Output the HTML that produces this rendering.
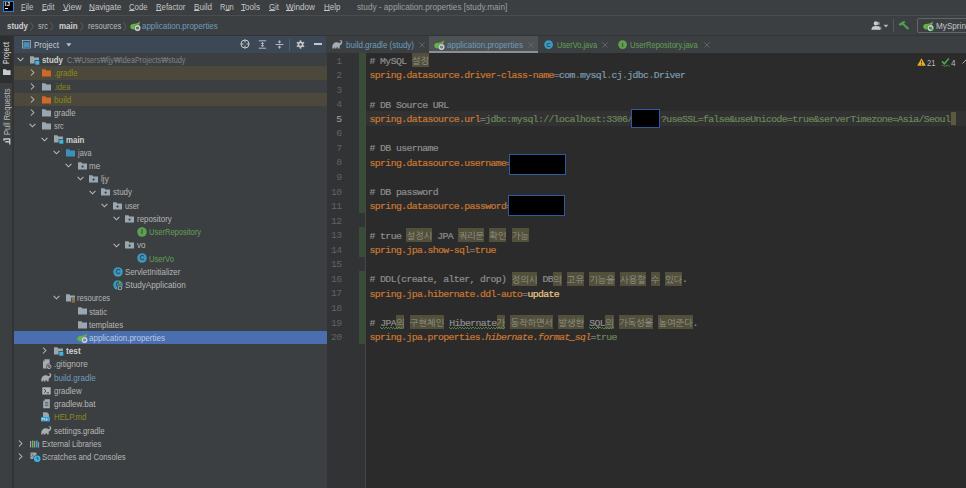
<!DOCTYPE html>
<html lang="ko"><head><meta charset="utf-8"><title>study - application.properties [study.main]</title>
<style>
html,body{margin:0;padding:0;background:#3c3f41;}
body{width:966px;height:488px;position:relative;overflow:hidden;font-family:"Liberation Sans","NanumGothic","Noto Sans CJK KR",sans-serif;font-size:8.6px;color:#bbbbbb;}
.a{position:absolute;white-space:pre;line-height:1;}
.t{position:absolute;white-space:pre;height:13.23px;line-height:13.23px;top:1.1px;}
.row{position:absolute;left:13px;width:313.6px;height:13.23px;}
.b{font-weight:bold;color:#d0d0d0}
.m{font-family:"Liberation Mono","NanumGothic","Noto Sans CJK KR",monospace;font-size:9.8px;letter-spacing:-0.62px;}
.ln{position:absolute;left:327px;width:14.5px;text-align:right;color:#606366;height:14.557px;line-height:14.557px;}
.cl{-webkit-text-stroke:0.2px;position:absolute;left:369.6px;height:14.557px;line-height:14.557px;white-space:pre;}
.cl>span{position:relative;top:2.1px}.cl>span.kr{top:0.5px}.cl>span.ty{top:0}.ty>span.kr{position:relative;top:0.5px}.ty>span.c{position:relative;top:2.1px}
.k{color:#cc7832}.c{color:#8e8e8e}.g{color:#6a8759}.v{color:#7d9cb0}.e{color:#808080}
.kr{font-family:"Liberation Sans","NanumGothic","Noto Sans CJK KR",sans-serif;font-size:9.1px;background:#52503a;display:inline-block;height:14.057px;line-height:17.557000000000002px;vertical-align:top;color:#94948c;letter-spacing:0;-webkit-text-stroke:0}
.ty::after{content:'';position:absolute;left:0;right:0;bottom:-1.5px;height:1.6px;background:repeating-linear-gradient(90deg,#5c9c4c 0 1.3px,transparent 1.3px 2.6px) 0 0/100% 0.8px no-repeat,repeating-linear-gradient(90deg,transparent 0 1.3px,#5c9c4c 1.3px 2.6px) 0 0.8px/100% 0.8px no-repeat;}
svg{position:absolute;overflow:visible}
u{text-decoration:underline;text-underline-offset:0px;text-decoration-thickness:0.6px}
</style></head><body>

<div class="a" style="left:0;top:0;width:966px;height:16px;background:#3c3f41"></div>
<div class="a" style="left:3px;top:0.8px;width:11px;height:11.2px;background:#000;border:0.8px solid #2f7fd6;box-sizing:border-box"></div>
<div class="a" style="left:4.8px;top:2.2px;font-size:5.6px;font-weight:bold;color:#fff;letter-spacing:0.3px">IJ</div>
<div class="a" style="left:5px;top:8.3px;width:3.4px;height:0.9px;background:#fff"></div>
<div id="s1" class="a" style="left:21px;top:3.4px;transform:scaleX(0.8875);transform-origin:0 0;color:#c4c4c4"><u>F</u>ile</div>
<div id="s2" class="a" style="left:42px;top:3.4px;transform:scaleX(0.8439);transform-origin:0 0;color:#c4c4c4"><u>E</u>dit</div>
<div id="s3" class="a" style="left:63px;top:3.4px;transform:scaleX(0.9900);transform-origin:0 0;color:#c4c4c4"><u>V</u>iew</div>
<div id="s4" class="a" style="left:89px;top:3.4px;transform:scaleX(0.9488);transform-origin:0 0;color:#c4c4c4"><u>N</u>avigate</div>
<div id="s5" class="a" style="left:128.7px;top:3.4px;transform:scaleX(0.8997);transform-origin:0 0;color:#c4c4c4"><u>C</u>ode</div>
<div id="s6" class="a" style="left:156px;top:3.4px;transform:scaleX(0.9015);transform-origin:0 0;color:#c4c4c4"><u>R</u>efactor</div>
<div id="s7" class="a" style="left:193.5px;top:3.4px;transform:scaleX(0.9412);transform-origin:0 0;color:#c4c4c4"><u>B</u>uild</div>
<div id="s8" class="a" style="left:219.5px;top:3.4px;transform:scaleX(0.8745);transform-origin:0 0;color:#c4c4c4">R<u>u</u>n</div>
<div id="s9" class="a" style="left:241px;top:3.4px;transform:scaleX(0.9470);transform-origin:0 0;color:#c4c4c4"><u>T</u>ools</div>
<div id="s10" class="a" style="left:268.5px;top:3.4px;transform:scaleX(0.9104);transform-origin:0 0;color:#c4c4c4"><u>G</u>it</div>
<div id="s11" class="a" style="left:286px;top:3.4px;transform:scaleX(0.9479);transform-origin:0 0;color:#c4c4c4"><u>W</u>indow</div>
<div id="s12" class="a" style="left:324px;top:3.4px;transform:scaleX(0.9216);transform-origin:0 0;color:#c4c4c4"><u>H</u>elp</div>
<div id="s13" class="a" style="left:357px;top:3.0px;transform:scaleX(0.9509);transform-origin:0 0;color:#9c9fa1">study - application.properties [study.main]</div>
<div class="a" style="left:0;top:15.2px;width:966px;height:0.8px;background:#4a4d4f"></div>
<div id="s14" class="a b" style="left:6.5px;top:22px;transform:scaleX(0.9162);transform-origin:0 0;">study</div>
<svg style="left:29.5px;top:21.8px" width="4" height="9" viewBox="0 0 4 9"><path d="M0.5 0.3 L3.2 4.5 L0.5 8.7" fill="none" stroke="#66696b" stroke-width="0.7"/></svg>
<div id="s15" class="a" style="left:38.3px;top:22px;transform:scaleX(0.8632);transform-origin:0 0;">src</div>
<svg style="left:50.4px;top:21.8px" width="4" height="9" viewBox="0 0 4 9"><path d="M0.5 0.3 L3.2 4.5 L0.5 8.7" fill="none" stroke="#66696b" stroke-width="0.7"/></svg>
<div id="s16" class="a b" style="left:58.6px;top:22px;transform:scaleX(0.9271);transform-origin:0 0;">main</div>
<svg style="left:79.8px;top:21.8px" width="4" height="9" viewBox="0 0 4 9"><path d="M0.5 0.3 L3.2 4.5 L0.5 8.7" fill="none" stroke="#66696b" stroke-width="0.7"/></svg>
<div id="s17" class="a" style="left:87.6px;top:22px;transform:scaleX(0.8851);transform-origin:0 0;">resources</div>
<svg style="left:123.2px;top:21.8px" width="4" height="9" viewBox="0 0 4 9"><path d="M0.5 0.3 L3.2 4.5 L0.5 8.7" fill="none" stroke="#66696b" stroke-width="0.7"/></svg>
<div id="s18" class="a" style="left:141.8px;top:22px;transform:scaleX(0.9277);transform-origin:0 0;color:#6d9cbe">application.properties</div>
<div class="a" style="left:0;top:35.3px;width:966px;height:0.9px;background:#323537"></div>
<svg style="left:129.5px;top:20.6px" width="11" height="10.5" viewBox="0 0 11 10.5"><path d="M9.7 0.3 C10 2.4 9.4 4.2 8 5.2 L4.6 8.3 C2.6 8.9 0.2 7.8 0.2 5.5 C0.2 3.3 2.4 2.8 4.8 2.7 C6.9 2.6 8.6 2 9.7 0.3Z" fill="#62b543"/><circle cx="7.5" cy="7.1" r="3.25" fill="#3c3f41"/><circle cx="7.5" cy="7.1" r="2.2" fill="none" stroke="#c9cdd0" stroke-width="1.7"/><circle cx="7.5" cy="7.1" r="0.5" fill="#c9cdd0"/></svg>
<svg style="left:870.6px;top:21px" width="19" height="9" viewBox="0 0 19 9"><circle cx="7.2" cy="2.4" r="1.7" fill="#8d9194"/><path d="M5 8.4 C5 5.6 6 4.9 7.6 4.9 S10.6 5.8 10.6 8.4Z" fill="#8d9194"/><circle cx="4.8" cy="2.4" r="2.1" fill="#c8cbcd"/><path d="M0.4 8.8 C0.4 6 2.2 5 4.8 5 S9.2 6 9.2 8.8Z" fill="#c8cbcd"/><path d="M12.4 3.8 L17.4 3.8 L14.9 6.6Z" fill="#b4b7b9"/></svg>
<div class="a" style="left:893.3px;top:19px;width:0.8px;height:13px;background:#55585a"></div>
<svg style="left:898px;top:20px" width="12" height="11" viewBox="0 0 12 11"><path d="M1.3 5 L6.7 1.6" stroke="#4fa354" stroke-width="2.1" fill="none"/><path d="M4.2 3.3 L10.4 9.1" stroke="#4fa354" stroke-width="2" fill="none"/></svg>
<div class="a" style="left:917.2px;top:18.4px;width:60px;height:14.8px;border:0.8px solid #646769;border-radius:2px;box-sizing:border-box"></div>
<svg style="left:923.4px;top:21.4px" width="11" height="10.5" viewBox="0 0 11 10.5"><path d="M9.7 0.3 C10 2.4 9.4 4.2 8 5.2 L4.6 8.3 C2.6 8.9 0.2 7.8 0.2 5.5 C0.2 3.3 2.4 2.8 4.8 2.7 C6.9 2.6 8.6 2 9.7 0.3Z" fill="#62b543"/><circle cx="7.5" cy="7.1" r="3.25" fill="#3c3f41"/><circle cx="7.5" cy="7.1" r="2.2" fill="none" stroke="#c9cdd0" stroke-width="1.7"/><circle cx="7.5" cy="7.1" r="0.5" fill="#c9cdd0"/><circle cx="8.9" cy="8.6" r="1.4" fill="#1fe01f"/></svg>
<div class="a" style="left:936.4px;top:22.3px;font-size:8.6px;color:#c4c4c4;transform:scaleX(0.95);transform-origin:0 0">MySpringApplication</div>
<div class="a" style="left:0;top:36.2px;width:13px;height:452px;background:#3c3f41"></div>
<div class="a" style="left:0;top:36.2px;width:13px;height:46.5px;background:#2d2f30"></div>
<div class="a" style="left:2.2px;top:64.4px;transform:rotate(-90deg) scaleX(0.84);transform-origin:0 0;font-size:8.4px;color:#e0e0e0;">Project</div>
<svg style="left:2.5px;top:68.5px" width="7.6" height="6.2" viewBox="0 0 8 6"><path d="M0 0 H3 L3.8 1 H8 V6 H0Z" fill="#c7cbce"/></svg>
<div class="a" style="left:2.6px;top:134.8px;transform:rotate(-90deg) scaleX(0.9);transform-origin:0 0;font-size:8.4px;color:#b8b8b8;">Pull Requests</div>
<svg style="left:3px;top:138.4px" width="8" height="7" viewBox="0 0 8 7"><path d="M6.7 0.4 V6.6 M0.4 1 H6.7 M2.2 3.7 H6.7 M1 1 V2.8" fill="none" stroke="#c6c9cb" stroke-width="1.35"/></svg>
<div class="a" style="left:13.4px;top:36.2px;width:313px;height:16.9px;background:#3c4855"></div>
<svg style="left:21.6px;top:39.8px" width="9" height="9" viewBox="0 0 9 9"><rect x="0.4" y="0.4" width="8.2" height="7.6" fill="none" stroke="#a4abb1" stroke-width="0.8"/><rect x="1.4" y="2.2" width="6.2" height="4.8" fill="#3a94c5"/></svg>
<div id="s19" class="a" style="left:34.2px;top:41px;transform:scaleX(0.9091);transform-origin:0 0;color:#c8cbcd;font-size:8.8px">Project</div>
<svg style="left:66px;top:42.8px" width="6" height="4" viewBox="0 0 6 4"><path d="M0.2 0.3 H5.4 L2.8 3.4Z" fill="#c0c3c5"/></svg>
<svg style="left:239.6px;top:39.4px" width="10" height="10" viewBox="0 0 9 9"><circle cx="4.5" cy="4.5" r="3.6" fill="none" stroke="#c4c7c9" stroke-width="0.9"/><path d="M4.5 0.5 V3.2 M4.5 5.8 V8.5 M0.5 4.5 H3.2 M5.8 4.5 H8.5" stroke="#c4c7c9" stroke-width="0.9"/></svg>
<svg style="left:257.5px;top:39.8px" width="9" height="9" viewBox="0 0 9 9"><path d="M0.8 0.8 H8.2 M0.8 8.2 H8.2" stroke="#c4c7c9" stroke-width="0.9"/><path d="M4.5 2 L6.3 3.8 H2.7Z M4.5 7 L6.3 5.2 H2.7Z" fill="#c4c7c9"/><path d="M4.5 3 V6" stroke="#c4c7c9" stroke-width="0.8"/></svg>
<svg style="left:274.5px;top:39.8px" width="9" height="9" viewBox="0 0 9 9"><path d="M0.6 4.5 H8.4" stroke="#c4c7c9" stroke-width="0.9"/><path d="M4.5 3.4 L6.3 1.4 H2.7Z M4.5 5.6 L6.3 7.6 H2.7Z" fill="#c4c7c9"/><path d="M4.5 0.3 V2 M4.5 7 V8.7" stroke="#c4c7c9" stroke-width="0.8"/></svg>
<div class="a" style="left:289px;top:38.5px;width:0.8px;height:12px;background:#525d69"></div>
<svg style="left:295.5px;top:40px" width="9" height="9" viewBox="0 0 9 9"><g fill="#c4c7c9"><circle cx="4.5" cy="4.5" r="2.9"/><rect x="3.7" y="0.3" width="1.6" height="8.4"/><rect x="3.7" y="0.3" width="1.6" height="8.4" transform="rotate(60 4.5 4.5)"/><rect x="3.7" y="0.3" width="1.6" height="8.4" transform="rotate(120 4.5 4.5)"/></g><circle cx="4.5" cy="4.5" r="1.2" fill="#3c4855"/></svg>
<div class="a" style="left:313.9px;top:43.3px;width:8.2px;height:1.5px;background:#c4c7c9"></div>
<div class="a" style="left:13.4px;top:53.1px;width:313px;height:435px;background:#3c3f41"></div>
<div class="row" style="top:53.10px;">
<svg style="left:3.7px;top:4.2px" width="7" height="5" viewBox="0 0 7 5"><path d="M0.6 0.8 L3.5 3.8 L6.4 0.8" fill="none" stroke="#b6b9bb" stroke-width="1.05"/></svg>
<svg style="left:17.0px;top:3px" width="9" height="8" viewBox="0 0 9 8"><path d="M0 0.3 H3.4 L4.3 1.4 H9 V7.4 H0Z" fill="#9aa7b0"/><rect x="4.6" y="4" width="5.2" height="5.2" fill="#3c3f41"/><rect x="5.3" y="4.7" width="4" height="4" fill="#40b6e0"/></svg>
<div id="s20" class="t" style="left:28.7px;color:#b6b6b6;transform:scaleX(0.9074);transform-origin:0 0;"><span class="b">study</span></div>
</div>
<div class="row" style="top:66.33px;background:#4c483b;">
<svg style="left:16.7px;top:3px" width="5" height="7" viewBox="0 0 5 7"><path d="M0.9 0.5 L3.9 3.5 L0.9 6.5" fill="none" stroke="#b6b9bb" stroke-width="1.05"/></svg>
<svg style="left:29.0px;top:3px" width="9" height="8" viewBox="0 0 9 8"><path d="M0 0.3 H3.4 L4.3 1.4 H9 V7.4 H0Z" fill="#d0682a"/></svg>
<div id="s21" class="t" style="left:40.6px;color:#8a8a1c;transform:scaleX(0.8980);transform-origin:0 0;">.gradle</div>
</div>
<div class="row" style="top:79.56px;">
<svg style="left:16.7px;top:3px" width="5" height="7" viewBox="0 0 5 7"><path d="M0.9 0.5 L3.9 3.5 L0.9 6.5" fill="none" stroke="#b6b9bb" stroke-width="1.05"/></svg>
<svg style="left:29.0px;top:3px" width="9" height="8" viewBox="0 0 9 8"><path d="M0 0.3 H3.4 L4.3 1.4 H9 V7.4 H0Z" fill="#9aa7b0"/></svg>
<div id="s22" class="t" style="left:40.6px;color:#8a8a1c;transform:scaleX(0.8798);transform-origin:0 0;">.idea</div>
</div>
<div class="row" style="top:92.79px;background:#4c483b;">
<svg style="left:16.7px;top:3px" width="5" height="7" viewBox="0 0 5 7"><path d="M0.9 0.5 L3.9 3.5 L0.9 6.5" fill="none" stroke="#b6b9bb" stroke-width="1.05"/></svg>
<svg style="left:29.0px;top:3px" width="9" height="8" viewBox="0 0 9 8"><path d="M0 0.3 H3.4 L4.3 1.4 H9 V7.4 H0Z" fill="#d0682a"/></svg>
<div id="s23" class="t" style="left:40.6px;color:#8a8a1c;transform:scaleX(0.9575);transform-origin:0 0;">build</div>
</div>
<div class="row" style="top:106.02px;">
<svg style="left:16.7px;top:3px" width="5" height="7" viewBox="0 0 5 7"><path d="M0.9 0.5 L3.9 3.5 L0.9 6.5" fill="none" stroke="#b6b9bb" stroke-width="1.05"/></svg>
<svg style="left:29.0px;top:3px" width="9" height="8" viewBox="0 0 9 8"><path d="M0 0.3 H3.4 L4.3 1.4 H9 V7.4 H0Z" fill="#9aa7b0"/></svg>
<div id="s24" class="t" style="left:40.7px;color:#b6b6b6;transform:scaleX(0.9083);transform-origin:0 0;">gradle</div>
</div>
<div class="row" style="top:119.25px;">
<svg style="left:15.7px;top:4.2px" width="7" height="5" viewBox="0 0 7 5"><path d="M0.6 0.8 L3.5 3.8 L6.4 0.8" fill="none" stroke="#b6b9bb" stroke-width="1.05"/></svg>
<svg style="left:29.0px;top:3px" width="9" height="8" viewBox="0 0 9 8"><path d="M0 0.3 H3.4 L4.3 1.4 H9 V7.4 H0Z" fill="#9aa7b0"/></svg>
<div id="s25" class="t" style="left:40.7px;color:#b6b6b6;transform:scaleX(0.8545);transform-origin:0 0;">src</div>
</div>
<div class="row" style="top:132.48px;">
<svg style="left:27.7px;top:4.2px" width="7" height="5" viewBox="0 0 7 5"><path d="M0.6 0.8 L3.5 3.8 L6.4 0.8" fill="none" stroke="#b6b9bb" stroke-width="1.05"/></svg>
<svg style="left:40.7px;top:3px" width="9" height="8" viewBox="0 0 9 8"><path d="M0 0.3 H3.4 L4.3 1.4 H9 V7.4 H0Z" fill="#9aa7b0"/><rect x="4.6" y="4" width="5.2" height="5.2" fill="#3c3f41"/><rect x="5.3" y="4.7" width="4" height="4" fill="#40b6e0"/></svg>
<div id="s26" class="t" style="left:52.6px;color:#b6b6b6;transform:scaleX(0.9171);transform-origin:0 0;"><span class="b">main</span></div>
</div>
<div class="row" style="top:145.71px;">
<svg style="left:39.7px;top:4.2px" width="7" height="5" viewBox="0 0 7 5"><path d="M0.6 0.8 L3.5 3.8 L6.4 0.8" fill="none" stroke="#b6b9bb" stroke-width="1.05"/></svg>
<svg style="left:52.6px;top:3px" width="9" height="8" viewBox="0 0 9 8"><path d="M0 0.3 H3.4 L4.3 1.4 H9 V7.4 H0Z" fill="#3a90b8"/></svg>
<div id="s27" class="t" style="left:64.5px;color:#b6b6b6;transform:scaleX(0.8563);transform-origin:0 0;">java</div>
</div>
<div class="row" style="top:158.94px;">
<svg style="left:51.7px;top:4.2px" width="7" height="5" viewBox="0 0 7 5"><path d="M0.6 0.8 L3.5 3.8 L6.4 0.8" fill="none" stroke="#b6b9bb" stroke-width="1.05"/></svg>
<svg style="left:64.5px;top:3px" width="9" height="8" viewBox="0 0 9 8"><path d="M0 0.3 H3.4 L4.3 1.4 H9 V7.4 H0Z" fill="#9aa7b0"/><circle cx="4.6" cy="4.6" r="1.1" fill="#3c3f41"/></svg>
<div id="s28" class="t" style="left:76.3px;color:#b6b6b6;transform:scaleX(0.9286);transform-origin:0 0;">me</div>
</div>
<div class="row" style="top:172.17px;">
<svg style="left:63.7px;top:4.2px" width="7" height="5" viewBox="0 0 7 5"><path d="M0.6 0.8 L3.5 3.8 L6.4 0.8" fill="none" stroke="#b6b9bb" stroke-width="1.05"/></svg>
<svg style="left:76.3px;top:3px" width="9" height="8" viewBox="0 0 9 8"><path d="M0 0.3 H3.4 L4.3 1.4 H9 V7.4 H0Z" fill="#9aa7b0"/><circle cx="4.6" cy="4.6" r="1.1" fill="#3c3f41"/></svg>
<div id="s29" class="t" style="left:88.2px;color:#b6b6b6;transform:scaleX(0.9600);transform-origin:0 0;">ljy</div>
</div>
<div class="row" style="top:185.40px;">
<svg style="left:75.7px;top:4.2px" width="7" height="5" viewBox="0 0 7 5"><path d="M0.6 0.8 L3.5 3.8 L6.4 0.8" fill="none" stroke="#b6b9bb" stroke-width="1.05"/></svg>
<svg style="left:88.0px;top:3px" width="9" height="8" viewBox="0 0 9 8"><path d="M0 0.3 H3.4 L4.3 1.4 H9 V7.4 H0Z" fill="#9aa7b0"/><circle cx="4.6" cy="4.6" r="1.1" fill="#3c3f41"/></svg>
<div id="s30" class="t" style="left:100.0px;color:#b6b6b6;transform:scaleX(0.9247);transform-origin:0 0;">study</div>
</div>
<div class="row" style="top:198.63px;">
<svg style="left:87.7px;top:4.2px" width="7" height="5" viewBox="0 0 7 5"><path d="M0.6 0.8 L3.5 3.8 L6.4 0.8" fill="none" stroke="#b6b9bb" stroke-width="1.05"/></svg>
<svg style="left:100.0px;top:3px" width="9" height="8" viewBox="0 0 9 8"><path d="M0 0.3 H3.4 L4.3 1.4 H9 V7.4 H0Z" fill="#9aa7b0"/><circle cx="4.6" cy="4.6" r="1.1" fill="#3c3f41"/></svg>
<div id="s31" class="t" style="left:112.0px;color:#b6b6b6;transform:scaleX(0.8553);transform-origin:0 0;">user</div>
</div>
<div class="row" style="top:211.86px;">
<svg style="left:99.7px;top:4.2px" width="7" height="5" viewBox="0 0 7 5"><path d="M0.6 0.8 L3.5 3.8 L6.4 0.8" fill="none" stroke="#b6b9bb" stroke-width="1.05"/></svg>
<svg style="left:112.0px;top:3px" width="9" height="8" viewBox="0 0 9 8"><path d="M0 0.3 H3.4 L4.3 1.4 H9 V7.4 H0Z" fill="#9aa7b0"/><circle cx="4.6" cy="4.6" r="1.1" fill="#3c3f41"/></svg>
<div id="s32" class="t" style="left:123.9px;color:#b6b6b6;transform:scaleX(0.9222);transform-origin:0 0;">repository</div>
</div>
<div class="row" style="top:225.09px;">
<svg style="left:124.0px;top:1.8px" width="10" height="10" viewBox="0 0 9 9"><circle cx="4.5" cy="4.5" r="4.3" fill="#5fa04e"/><text x="4.5" y="6.6" font-size="5.8" font-weight="bold" text-anchor="middle" fill="#2b2f31" fill-opacity="0.85" font-family="Liberation Sans,sans-serif">I</text></svg>
<div id="s33" class="t" style="left:135.8px;color:#62a055;transform:scaleX(0.8779);transform-origin:0 0;">UserRepository</div>
</div>
<div class="row" style="top:238.32px;">
<svg style="left:99.7px;top:4.2px" width="7" height="5" viewBox="0 0 7 5"><path d="M0.6 0.8 L3.5 3.8 L6.4 0.8" fill="none" stroke="#b6b9bb" stroke-width="1.05"/></svg>
<svg style="left:112.0px;top:3px" width="9" height="8" viewBox="0 0 9 8"><path d="M0 0.3 H3.4 L4.3 1.4 H9 V7.4 H0Z" fill="#9aa7b0"/><circle cx="4.6" cy="4.6" r="1.1" fill="#3c3f41"/></svg>
<div id="s34" class="t" style="left:123.9px;color:#b6b6b6;transform:scaleX(0.9473);transform-origin:0 0;">vo</div>
</div>
<div class="row" style="top:251.55px;">
<svg style="left:124.0px;top:1.8px" width="10" height="10" viewBox="0 0 9 9"><circle cx="4.5" cy="4.5" r="4.3" fill="#3b98c0"/><text x="4.5" y="6.6" font-size="5.8" font-weight="bold" text-anchor="middle" fill="#2b2f31" fill-opacity="0.85" font-family="Liberation Sans,sans-serif">C</text></svg>
<div id="s35" class="t" style="left:135.8px;color:#62a055;transform:scaleX(0.8869);transform-origin:0 0;">UserVo</div>
</div>
<div class="row" style="top:264.78px;">
<svg style="left:100.0px;top:1.8px" width="10" height="10" viewBox="0 0 9 9"><circle cx="4.5" cy="4.5" r="4.3" fill="#3b98c0"/><text x="4.5" y="6.6" font-size="5.8" font-weight="bold" text-anchor="middle" fill="#2b2f31" fill-opacity="0.85" font-family="Liberation Sans,sans-serif">C</text></svg>
<div id="s36" class="t" style="left:112.0px;color:#b6b6b6;transform:scaleX(0.9117);transform-origin:0 0;">ServletInitializer</div>
</div>
<div class="row" style="top:278.01px;">
<svg style="left:100.0px;top:1.8px" width="10" height="10" viewBox="0 0 9 9"><circle cx="4.5" cy="4.5" r="4.3" fill="#3b98c0"/><text x="4.5" y="6.6" font-size="5.8" font-weight="bold" text-anchor="middle" fill="#2b2f31" fill-opacity="0.85" font-family="Liberation Sans,sans-serif">C</text></svg><svg style="left:104.5px;top:1.5px" width="5" height="5" viewBox="0 0 5 5"><path d="M0.5 0.3 L4.6 2.5 L0.5 4.7Z" fill="#5fb84e" stroke="#3c3f41" stroke-width="0.5"/></svg><svg style="left:104.0px;top:7px" width="6" height="6" viewBox="0 0 6 6"><circle cx="3" cy="3" r="2.8" fill="#3c3f41"/><circle cx="3" cy="3" r="1.8" fill="none" stroke="#c0c4c7" stroke-width="0.8"/></svg>
<div id="s37" class="t" style="left:112.0px;color:#b6b6b6;transform:scaleX(0.9480);transform-origin:0 0;">StudyApplication</div>
</div>
<div class="row" style="top:291.24px;">
<svg style="left:39.7px;top:4.2px" width="7" height="5" viewBox="0 0 7 5"><path d="M0.6 0.8 L3.5 3.8 L6.4 0.8" fill="none" stroke="#b6b9bb" stroke-width="1.05"/></svg>
<svg style="left:52.6px;top:3px" width="9" height="8" viewBox="0 0 9 8"><path d="M0 0.3 H3.4 L4.3 1.4 H9 V7.4 H0Z" fill="#9aa7b0"/><rect x="5" y="3.6" width="4.4" height="5" fill="#3c3f41"/><path d="M5.7 4.4 H9 M5.7 5.6 H9 M5.7 6.8 H9 M5.7 8 H9" stroke="#c9a14e" stroke-width="0.7"/></svg>
<div id="s38" class="t" style="left:64.3px;color:#b6b6b6;transform:scaleX(0.8772);transform-origin:0 0;">resources</div>
</div>
<div class="row" style="top:304.47px;">
<svg style="left:64.5px;top:3px" width="9" height="8" viewBox="0 0 9 8"><path d="M0 0.3 H3.4 L4.3 1.4 H9 V7.4 H0Z" fill="#9aa7b0"/></svg>
<div id="s39" class="t" style="left:76.3px;color:#b6b6b6;transform:scaleX(0.9072);transform-origin:0 0;">static</div>
</div>
<div class="row" style="top:317.70px;">
<svg style="left:64.5px;top:3px" width="9" height="8" viewBox="0 0 9 8"><path d="M0 0.3 H3.4 L4.3 1.4 H9 V7.4 H0Z" fill="#9aa7b0"/></svg>
<div id="s40" class="t" style="left:76.3px;color:#b6b6b6;transform:scaleX(0.9151);transform-origin:0 0;">templates</div>
</div>
<div class="row" style="top:330.93px;background:#4b6eaf;">
<svg style="left:63.9px;top:2.5px" width="11" height="10.5" viewBox="0 0 11 10.5"><path d="M9.7 0.3 C10 2.4 9.4 4.2 8 5.2 L4.6 8.3 C2.6 8.9 0.2 7.8 0.2 5.5 C0.2 3.3 2.4 2.8 4.8 2.7 C6.9 2.6 8.6 2 9.7 0.3Z" fill="#62b543"/><circle cx="7.5" cy="7.1" r="3.25" fill="#4b6eaf"/><circle cx="7.5" cy="7.1" r="2.2" fill="none" stroke="#c9cdd0" stroke-width="1.7"/><circle cx="7.5" cy="7.1" r="0.5" fill="#c9cdd0"/></svg>
<div id="s41" class="t" style="left:76.3px;color:#b8c9e6;transform:scaleX(0.9290);transform-origin:0 0;">application.properties</div>
</div>
<div class="row" style="top:344.16px;">
<svg style="left:28.7px;top:3px" width="5" height="7" viewBox="0 0 5 7"><path d="M0.9 0.5 L3.9 3.5 L0.9 6.5" fill="none" stroke="#b6b9bb" stroke-width="1.05"/></svg>
<svg style="left:40.7px;top:3px" width="9" height="8" viewBox="0 0 9 8"><path d="M0 0.3 H3.4 L4.3 1.4 H9 V7.4 H0Z" fill="#9aa7b0"/><rect x="4.6" y="4" width="5.2" height="5.2" fill="#3c3f41"/><rect x="5.3" y="4.7" width="4" height="4" fill="#40b6e0"/></svg>
<div id="s42" class="t" style="left:52.7px;color:#b6b6b6;transform:scaleX(0.9610);transform-origin:0 0;"><span class="b">test</span></div>
</div>
<div class="row" style="top:357.39px;">
<svg style="left:29.0px;top:1.9px" width="10" height="11" viewBox="0 0 10 11"><path d="M3 0.2 H7.6 V9.4 H1 V2.2Z" fill="#a4acb2"/><path d="M1 2.2 H3 V0.2Z" fill="#6f777d"/><circle cx="7" cy="7.6" r="2.9" fill="#3c3f41"/><circle cx="7" cy="7.6" r="2" fill="none" stroke="#b4babf" stroke-width="0.9"/><path d="M5.6 9 L8.4 6.2" stroke="#b4babf" stroke-width="0.9"/></svg>
<div id="s43" class="t" style="left:40.6px;color:#b6b6b6;transform:scaleX(0.9531);transform-origin:0 0;">.gitignore</div>
</div>
<div class="row" style="top:370.62px;">
<svg style="left:28.0px;top:2.4px" width="11" height="9" viewBox="0 0 11 9"><path d="M0.3 8.6 C0.1 6 0.8 3.4 3 2.6 C4.6 2 6.4 2.2 7.4 3 C8.2 3.4 8.6 2.8 8.8 2 C9 1.2 8.6 0.9 8 1.1 L7.6 0.5 C8.8 -0.1 10.4 0.4 10.3 2 C10.2 3.6 9 5 7.8 5.6 L7.6 8.6 H6 L5.8 7.2 H4.6 L4.4 8.6 H2.8 L2.6 7.2 H2 L1.8 8.6Z" fill="#a5adb3"/></svg>
<div id="s44" class="t" style="left:40.6px;color:#6d9cbe;transform:scaleX(0.9406);transform-origin:0 0;">build.gradle</div>
</div>
<div class="row" style="top:383.85px;">
<svg style="left:29.0px;top:3px" width="9" height="8" viewBox="0 0 9 8"><rect x="0.3" y="0.3" width="8.4" height="7.2" fill="#aeb4b8"/><path d="M2 2 L4 3.9 L2 5.8" fill="none" stroke="#3c3f41" stroke-width="0.9"/><path d="M4.6 5.8 H7" stroke="#3c3f41" stroke-width="0.9"/></svg>
<div id="s45" class="t" style="left:40.6px;color:#b6b6b6;transform:scaleX(0.9167);transform-origin:0 0;">gradlew</div>
</div>
<div class="row" style="top:397.08px;">
<svg style="left:29.0px;top:2.2px" width="9" height="10" viewBox="0 0 9 10"><path d="M3.2 0.3 H7.8 V9.2 H1.2 V2.3Z" fill="#a4acb2"/><path d="M1.2 2.3 H3.2 V0.3Z" fill="#6f777d"/><path d="M3 3.4 H6.4 M3 5 H6.4 M3 6.6 H6.4" stroke="#50565a" stroke-width="0.8"/></svg>
<div id="s46" class="t" style="left:40.6px;color:#b6b6b6;transform:scaleX(0.9416);transform-origin:0 0;">gradlew.bat</div>
</div>
<div class="row" style="top:410.31px;">
<svg style="left:28.0px;top:2.2px" width="10" height="10" viewBox="0 0 10 10"><path d="M2 0.3 H6 L8 2.3 V9 H2Z" fill="#9aa7b0"/><rect x="0" y="5" width="9" height="4.4" fill="#369fd6"/><path d="M1 8.5 V6 L2.2 7.4 L3.4 6 V8.5 M5.6 6 V8.3 M4.6 7.4 L5.6 8.5 L6.6 7.4" stroke="#e6eef5" stroke-width="0.6" fill="none"/></svg>
<div id="s47" class="t" style="left:40.6px;color:#8a8a1c;transform:scaleX(0.9083);transform-origin:0 0;">HELP.md</div>
</div>
<div class="row" style="top:423.54px;">
<svg style="left:28.0px;top:2.4px" width="11" height="9" viewBox="0 0 11 9"><path d="M0.3 8.6 C0.1 6 0.8 3.4 3 2.6 C4.6 2 6.4 2.2 7.4 3 C8.2 3.4 8.6 2.8 8.8 2 C9 1.2 8.6 0.9 8 1.1 L7.6 0.5 C8.8 -0.1 10.4 0.4 10.3 2 C10.2 3.6 9 5 7.8 5.6 L7.6 8.6 H6 L5.8 7.2 H4.6 L4.4 8.6 H2.8 L2.6 7.2 H2 L1.8 8.6Z" fill="#a5adb3"/></svg>
<div id="s48" class="t" style="left:40.6px;color:#b6b6b6;transform:scaleX(0.9069);transform-origin:0 0;">settings.gradle</div>
</div>
<div class="row" style="top:436.77px;">
<svg style="left:4.7px;top:3px" width="5" height="7" viewBox="0 0 5 7"><path d="M0.9 0.5 L3.9 3.5 L0.9 6.5" fill="none" stroke="#b6b9bb" stroke-width="1.05"/></svg>
<svg style="left:17.0px;top:2.8px" width="10" height="8" viewBox="0 0 10 8"><path d="M0.6 1 V7.6" stroke="#a7b0b7" stroke-width="1.1"/><path d="M2.7 0.4 V7.6" stroke="#6cc04a" stroke-width="1.3"/><path d="M4.7 1 V7.6" stroke="#a7b0b7" stroke-width="1.1"/><path d="M6.8 0.4 V7.6" stroke="#40b6e0" stroke-width="1.3"/><path d="M8.6 2 V7.6" stroke="#a7b0b7" stroke-width="0.9"/></svg>
<div id="s49" class="t" style="left:28.8px;color:#b6b6b6;transform:scaleX(0.8852);transform-origin:0 0;">External Libraries</div>
</div>
<div class="row" style="top:450.00px;">
<svg style="left:4.7px;top:3px" width="5" height="7" viewBox="0 0 5 7"><path d="M0.9 0.5 L3.9 3.5 L0.9 6.5" fill="none" stroke="#b6b9bb" stroke-width="1.05"/></svg>
<svg style="left:16.5px;top:2px" width="11" height="10" viewBox="0 0 11 10"><path d="M0.5 0.5 H6.5 V7 H0.5Z" fill="#9aa7b0"/><path d="M1.6 2 L3 3.4 L1.6 4.8 M3.6 5 H5.4" stroke="#3c3f41" stroke-width="0.7" fill="none"/><circle cx="7.2" cy="6.8" r="3.9" fill="#3c3f41"/><circle cx="7.2" cy="6.8" r="3.3" fill="#38b4e6"/><path d="M7.2 4.9 V7 H8.8" stroke="#3c3f41" stroke-width="0.8" fill="none"/></svg>
<div id="s50" class="t" style="left:28.8px;color:#b6b6b6;transform:scaleX(0.8974);transform-origin:0 0;">Scratches and Consoles</div>
</div>
<div id="s51" class="a" style="left:67px;top:54.20px;height:13.23px;line-height:13.23px;color:#7f8385;transform:scaleX(0.8470);transform-origin:0 0;">C:₩Users₩ljy₩IdeaProjects₩study</div>
<div class="a" style="left:12.4px;top:36.2px;width:1.2px;height:452px;background:#313335"></div>
<div class="a" style="left:326.6px;top:36.2px;width:0.7px;height:452px;background:#2f3234"></div>
<div class="a" style="left:327px;top:36.2px;width:639px;height:16.9px;background:#3c3f41"></div>
<div class="a" style="left:429px;top:36.2px;width:109px;height:16.9px;background:#4e5254"></div>
<div class="a" style="left:429px;top:51.3px;width:109px;height:2.1px;background:#8a8f94"></div>
<svg style="left:332.2px;top:39.5px" width="11" height="9" viewBox="0 0 11 9"><path d="M0.3 8.6 C0.1 6 0.8 3.4 3 2.6 C4.6 2 6.4 2.2 7.4 3 C8.2 3.4 8.6 2.8 8.8 2 C9 1.2 8.6 0.9 8 1.1 L7.6 0.5 C8.8 -0.1 10.4 0.4 10.3 2 C10.2 3.6 9 5 7.8 5.6 L7.6 8.6 H6 L5.8 7.2 H4.6 L4.4 8.6 H2.8 L2.6 7.2 H2 L1.8 8.6Z" fill="#a5adb3"/></svg>
<div id="s52" class="a" style="left:346px;top:41.3px;transform:scaleX(0.9303);transform-origin:0 0;color:#6d9cbe">build.gradle (study)</div>
<svg style="left:418.5px;top:41.5px" width="6" height="6" viewBox="0 0 6 6"><path d="M0.5 0.5 L5.5 5.5 M5.5 0.5 L0.5 5.5" stroke="#6e7275" stroke-width="0.7"/></svg>
<svg style="left:434.4px;top:40.2px" width="11" height="10.5" viewBox="0 0 11 10.5"><path d="M9.7 0.3 C10 2.4 9.4 4.2 8 5.2 L4.6 8.3 C2.6 8.9 0.2 7.8 0.2 5.5 C0.2 3.3 2.4 2.8 4.8 2.7 C6.9 2.6 8.6 2 9.7 0.3Z" fill="#62b543"/><circle cx="7.5" cy="7.1" r="3.25" fill="#4e5254"/><circle cx="7.5" cy="7.1" r="2.2" fill="none" stroke="#c9cdd0" stroke-width="1.7"/><circle cx="7.5" cy="7.1" r="0.5" fill="#c9cdd0"/></svg>
<div id="s53" class="a" style="left:447.1px;top:41.3px;transform:scaleX(0.9290);transform-origin:0 0;color:#6d9cbe">application.properties</div>
<svg style="left:527.5px;top:41.5px" width="6" height="6" viewBox="0 0 6 6"><path d="M0.5 0.5 L5.5 5.5 M5.5 0.5 L0.5 5.5" stroke="#6e7275" stroke-width="0.7"/></svg>
<svg style="left:543.8px;top:40.1px" width="9.2" height="9.2" viewBox="0 0 9 9"><circle cx="4.5" cy="4.5" r="4.3" fill="#3b98c0"/><text x="4.5" y="6.6" font-size="5.8" font-weight="bold" text-anchor="middle" fill="#2b2f31" fill-opacity="0.85" font-family="Liberation Sans,sans-serif">C</text></svg>
<div id="s54" class="a" style="left:556.6px;top:41.3px;transform:scaleX(0.8653);transform-origin:0 0;color:#62a055">UserVo.java</div>
<svg style="left:601.5px;top:41.5px" width="6" height="6" viewBox="0 0 6 6"><path d="M0.5 0.5 L5.5 5.5 M5.5 0.5 L0.5 5.5" stroke="#6e7275" stroke-width="0.7"/></svg>
<svg style="left:617.8px;top:40.1px" width="9.2" height="9.2" viewBox="0 0 9 9"><circle cx="4.5" cy="4.5" r="4.3" fill="#5fa04e"/><text x="4.5" y="6.6" font-size="5.8" font-weight="bold" text-anchor="middle" fill="#2b2f31" fill-opacity="0.85" font-family="Liberation Sans,sans-serif">I</text></svg>
<div id="s55" class="a" style="left:630.4px;top:41.3px;transform:scaleX(0.8808);transform-origin:0 0;color:#62a055">UserRepository.java</div>
<svg style="left:703.5px;top:41.5px" width="6" height="6" viewBox="0 0 6 6"><path d="M0.5 0.5 L5.5 5.5 M5.5 0.5 L0.5 5.5" stroke="#6e7275" stroke-width="0.7"/></svg>
<div class="a" style="left:327px;top:53.1px;width:639px;height:435px;background:#2b2b2b"></div>
<div class="a" style="left:327px;top:53.1px;width:38.2px;height:435px;background:#313335"></div>
<div class="a" style="left:365.1px;top:53.1px;width:1.1px;height:435px;background:#444648"></div>
<div class="a" style="left:366.2px;top:111.03px;width:600px;height:14.56px;background:#323232"></div>
<div class="a" style="left:359.4px;top:52.80px;width:5.7px;height:160.13px;background:#384c38"></div>
<div class="a" style="left:359.4px;top:227.48px;width:5.7px;height:29.11px;background:#384c38"></div>
<div class="a" style="left:359.4px;top:271.16px;width:5.7px;height:72.78px;background:#384c38"></div>
<div class="ln m" style="top:54.50px;color:#606366">1</div>
<div class="cl m" style="top:52.80px"><span class="c"># MySQL </span><span class="kr">설정</span></div>
<div class="ln m" style="top:69.06px;color:#606366">2</div>
<div class="cl m" style="top:67.36px"><span class="k">spring.datasource.driver-class-name</span><span class="e">=</span><span class="v">com</span><span class="g">.</span><span class="v">mysql</span><span class="g">.</span><span class="v">cj</span><span class="g">.</span><span class="v">jdbc</span><span class="g">.</span><span class="v">Driver</span></div>
<div class="ln m" style="top:83.61px;color:#606366">3</div>
<div class="ln m" style="top:98.17px;color:#606366">4</div>
<div class="cl m" style="top:96.47px"><span class="c"># DB Source URL</span></div>
<div class="ln m" style="top:112.73px;color:#a4a3a3">5</div>
<div class="cl m" style="top:111.03px"><span class="k">spring.datasource.url</span><span class="e">=</span><span class="g">jdbc:mysql://localhost:3306/</span></div>
<div class="ln m" style="top:127.28px;color:#606366">6</div>
<div class="ln m" style="top:141.84px;color:#606366">7</div>
<div class="cl m" style="top:140.14px"><span class="c"># DB username</span></div>
<div class="ln m" style="top:156.40px;color:#606366">8</div>
<div class="cl m" style="top:154.70px"><span class="k">spring.datasource.username</span><span class="e">=</span></div>
<div class="ln m" style="top:170.96px;color:#606366">9</div>
<div class="ln m" style="top:185.51px;color:#606366">10</div>
<div class="cl m" style="top:183.81px"><span class="c"># DB password</span></div>
<div class="ln m" style="top:200.07px;color:#606366">11</div>
<div class="cl m" style="top:198.37px"><span class="k">spring.datasource.password</span><span class="e">=</span></div>
<div class="ln m" style="top:214.63px;color:#606366">12</div>
<div class="ln m" style="top:229.18px;color:#606366">13</div>
<div class="cl m" style="top:227.48px"><span class="c"># true </span><span class="kr">설정시</span><span class="c"> JPA </span><span class="kr">쿼리문</span><span class="c"> </span><span class="kr">확인</span><span class="c"> </span><span class="kr">가능</span></div>
<div class="ln m" style="top:243.74px;color:#606366">14</div>
<div class="cl m" style="top:242.04px"><span class="k">spring.jpa.show-sql</span><span class="e">=</span><span class="k">true</span></div>
<div class="ln m" style="top:258.30px;color:#606366">15</div>
<div class="ln m" style="top:272.86px;color:#606366">16</div>
<div class="cl m" style="top:271.16px"><span class="c"># DDL(create, alter, drop) </span><span class="kr">정의시</span><span class="c"> DB</span><span class="kr">의</span><span class="c"> </span><span class="kr">고유</span><span class="c"> </span><span class="kr">기능을</span><span class="c"> </span><span class="kr">사용할</span><span class="c"> </span><span class="kr">수</span><span class="c"> </span><span class="kr">있다</span><span class="c">.</span></div>
<div class="ln m" style="top:287.41px;color:#606366">17</div>
<div class="cl m" style="top:285.71px"><span class="k">spring.jpa.hibernate.ddl-auto</span><span class="e">=</span><span style="color:#ecc987">update</span></div>
<div class="ln m" style="top:301.97px;color:#606366">18</div>
<div class="ln m" style="top:316.53px;color:#606366">19</div>
<div class="cl m" style="top:314.83px"><span class="c"># </span><span class="ty"><span class="c">JPA</span><span class="kr">의</span></span><span class="c"> </span><span class="kr">구현체인</span><span class="c"> </span><span class="ty"><span class="c">Hibernate</span><span class="kr">가</span></span><span class="c"> </span><span class="kr">동작하면서</span><span class="c"> </span><span class="kr">발생한</span><span class="c"> </span><span class="ty"><span class="c">SQL</span><span class="kr">의</span></span><span class="c"> </span><span class="kr">가독성을</span><span class="c"> </span><span class="kr">높여준다</span><span class="c">.</span></div>
<div class="ln m" style="top:331.08px;color:#606366">20</div>
<div class="cl m" style="top:329.38px"><span class="k">spring.jpa.properties.<i>hibernate.format_sql</i></span><span class="e">=</span><span class="g">true</span></div>
<div class="cl m" style="top:111.03px;left:660.9px"><span class="g">?useSSL=false&amp;useUnicode=true&amp;serverTimezone=Asia/Seoul</span></div>
<div class="a" style="left:950.5px;top:111.53px;width:5.5px;height:13.56px;background:#5c5a3e"></div>
<div class="a" style="left:631px;top:109.1px;width:29px;height:18.5px;background:#000;border:0.7px solid #2d5aa0;box-sizing:border-box"></div>
<div class="a" style="left:509px;top:154.1px;width:57px;height:20.7px;background:#000;border:0.7px solid #2d5aa0;box-sizing:border-box"></div>
<div class="a" style="left:508px;top:195px;width:57px;height:20.6px;background:#000;border:0.7px solid #2d5aa0;box-sizing:border-box"></div>
<svg style="left:917px;top:58.2px" width="9" height="8" viewBox="0 0 9 8"><path d="M4.5 0.2 L8.8 7.8 H0.2Z" fill="#e8b023"/><path d="M4.5 2.8 V5.4 M4.5 6.1 V7" stroke="#3a3220" stroke-width="0.9"/></svg>
<div class="a" style="left:927px;top:58.9px;color:#bbbbbb;font-size:8.6px;transform:scaleX(0.88);transform-origin:0 0">21</div>
<svg style="left:941px;top:58.2px" width="9" height="9" viewBox="0 0 9 9"><path d="M1 3.4 L3.4 5.8 L7.8 0.6" fill="none" stroke="#55a845" stroke-width="1.5"/><path d="M0.6 7.8 Q1.7 6.6 2.8 7.8 T5 7.8 T7.2 7.8 T9 7.6" fill="none" stroke="#55a845" stroke-width="0.7"/></svg>
<div class="a" style="left:951.4px;top:58.9px;color:#bbbbbb;font-size:8.6px;transform:scaleX(0.95);transform-origin:0 0">4</div>
<svg style="left:962px;top:58.5px" width="8" height="6" viewBox="0 0 8 6"><path d="M0.5 4.5 L4 1 L7.5 4.5" fill="none" stroke="#b4b7b9" stroke-width="0.9"/></svg>
</body></html>
